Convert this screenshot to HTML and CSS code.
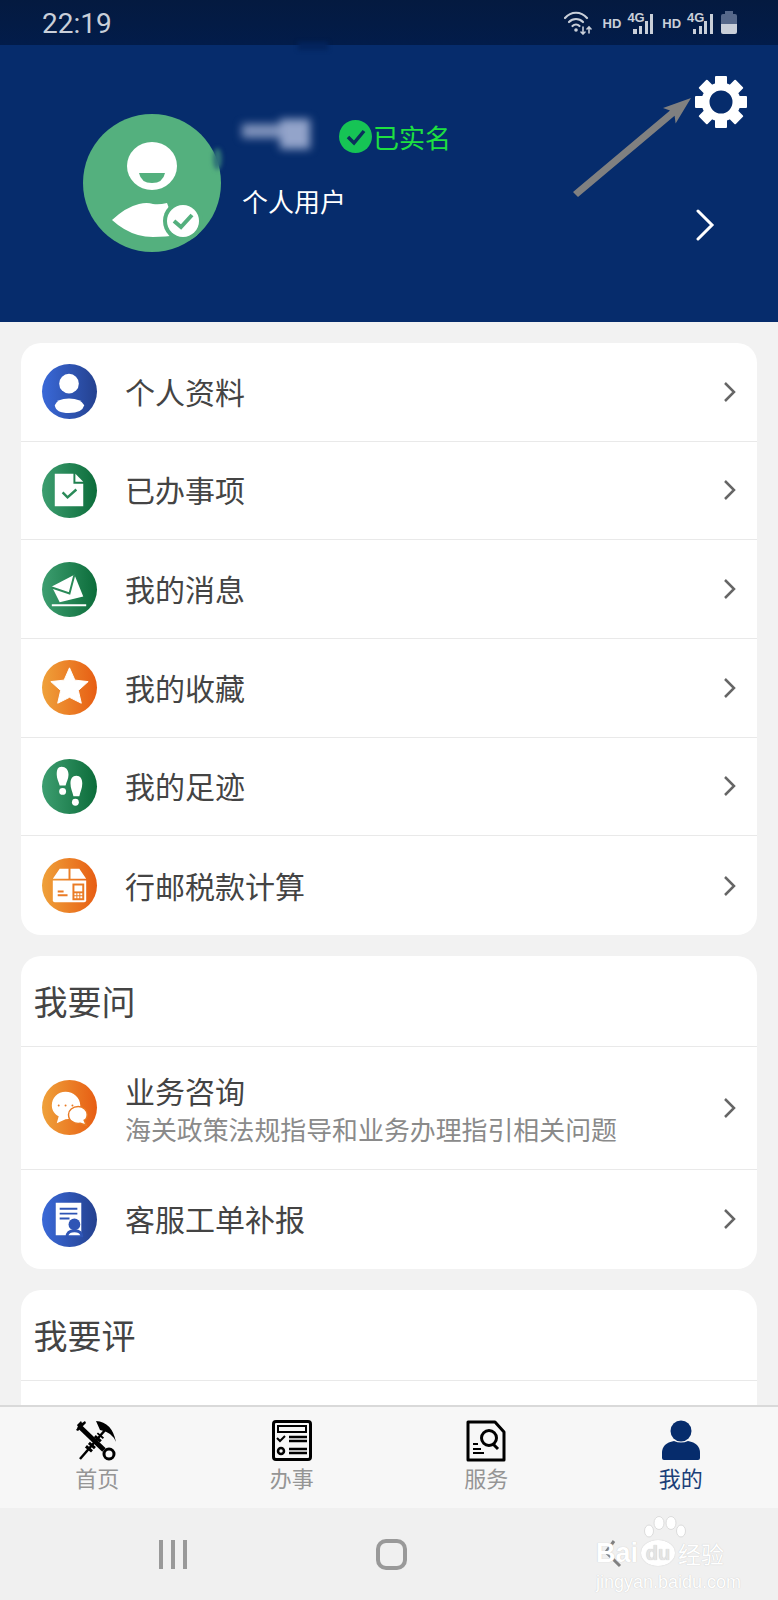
FILE: index.html
```html
<!DOCTYPE html>
<html lang="zh-CN">
<head>
  <meta charset="UTF-8">
  <meta name="viewport" content="width=device-width, initial-scale=1.0">
  <title>我的</title>
  <link rel="stylesheet" href="styles.css">
</head>
<body>
  <div class="app">
    <div class="status-bar">
      <span class="clock">22:19</span>
      <div class="status-icons">
        <svg class="wifi" width="28" height="24" viewBox="0 0 28 24" fill="none" stroke="#c9cfd9" stroke-width="2.200" stroke-linecap="round">
          <path d="M1 7c6-7 16-7 22 0"/>
          <path d="M5 11c4-4 10-4 14 0"/>
          <path d="M8.500 15c2-2 5-2 7 0"/>
          <circle cx="12" cy="19" r="1.800" fill="#c9cfd9" stroke="none"/>
          <path d="M19 16v7M17 21l2 2 2-2M25 22v-6M23 18l2-2 2 2" stroke-width="1.600"/>
        </svg>
        <span class="hd hd-first">HD</span>
        <div class="signal">
          <span class="net">4G</span>
          <i class="b1"></i><i class="b2"></i><i class="b3"></i><i class="b4"></i>
        </div>
        <span class="hd">HD</span>
        <div class="signal">
          <span class="net">4G</span>
          <i class="b1"></i><i class="b2"></i><i class="b3"></i><i class="b4"></i>
        </div>
        <div class="battery"></div>
      </div>
    </div>

    <header class="profile">
      <div class="top-smudge"></div>
      <div class="avatar">
        <svg width="138" height="138" viewBox="0 0 138 138">
          <circle cx="69" cy="69" r="69" fill="#54b07e"/>
          <ellipse cx="69" cy="52" rx="25" ry="24" fill="#fff"/>
          <path d="M56 59h26q-2 10-13 10t-13-10z" fill="#54b07e"/>
          <path d="M29 106q14-13 27-16 8-2 14 0 6 1 14-1l12 32q-14 2-26 2-8 0-15-2-14-4-26-15z" fill="#fff"/>
          <circle cx="100" cy="107" r="20" fill="#54b07e"/>
          <circle cx="100" cy="107" r="16" fill="#fff"/>
          <path d="M91 107l7 6 11-12" fill="none" stroke="#54b07e" stroke-width="4"/>
        </svg>
      </div>
      <div class="avatar-smudge"></div>
      <div class="info">
        <div class="name-line">
          <div class="name-blur"><i></i><b></b></div>
          <div class="verified">
            <svg width="33" height="33" viewBox="0 0 33 33">
              <circle cx="16.500" cy="16.500" r="16.500" fill="#16c455"/>
              <path d="M9 17l6 6 10-12" fill="none" stroke="#0b2f5c" stroke-width="3.500"/>
            </svg>
            <span>已实名</span>
          </div>
        </div>
        <p class="user-type">个人用户</p>
      </div>
      <svg class="gear" width="54" height="54" viewBox="-27 -27 54 54">
        <circle r="15.500" fill="none" stroke="#fff" stroke-width="8"/>
        <g fill="#fff">
          <rect x="-6" y="-26" width="12" height="10" rx="1"/>
          <rect x="-6" y="-26" width="12" height="10" rx="1" transform="rotate(45)"/>
          <rect x="-6" y="-26" width="12" height="10" rx="1" transform="rotate(90)"/>
          <rect x="-6" y="-26" width="12" height="10" rx="1" transform="rotate(135)"/>
          <rect x="-6" y="-26" width="12" height="10" rx="1" transform="rotate(180)"/>
          <rect x="-6" y="-26" width="12" height="10" rx="1" transform="rotate(225)"/>
          <rect x="-6" y="-26" width="12" height="10" rx="1" transform="rotate(270)"/>
          <rect x="-6" y="-26" width="12" height="10" rx="1" transform="rotate(315)"/>
        </g>
      </svg>
      <svg class="arrow" width="124" height="108" viewBox="0 0 124 108">
        <path fill="#808080" d="M1 98L98 16.400 91 13.900 119 4 103.600 29.500 102.600 21.800 6 103z"/>
      </svg>
      <svg class="more" width="20" height="32" viewBox="0 0 20 32" fill="none" stroke="#fff" stroke-width="3" stroke-linecap="round">
        <path d="M3 2l14 14L3 30"/>
      </svg>
    </header>

    <main class="content">
      <section class="card">
        <a class="row">
          <span class="badge blue">
            <svg viewBox="0 0 56 56"><circle cx="27.500" cy="20" r="10" fill="#fff"/><path d="M13 42q2-7 14.500-7T43 42q-2 8-15.500 8T13 42z" fill="#fff"/></svg>
          </span>
          <span class="title">个人资料</span>
          <svg class="chev" viewBox="0 0 14 22"><path d="M2 2l9 9-9 9"/></svg>
        </a>
        <a class="row">
          <span class="badge green">
            <svg viewBox="0 0 56 56"><path d="M13 11h19v10h10v23H13z" fill="#fff"/><path d="M34 11l8 8h-8z" fill="#fff"/><path d="M21 30l5 5 9-8" fill="none" stroke="#2a8a58" stroke-width="2.500"/></svg>
          </span>
          <span class="title">已办事项</span>
          <svg class="chev" viewBox="0 0 14 22"><path d="M2 2l9 9-9 9"/></svg>
        </a>
        <a class="row">
          <span class="badge green">
            <svg viewBox="0 0 56 56"><path d="M10 25l23-12 9 22-24 6z" fill="#fff"/><path d="M10 26l18 6 5-19" fill="none" stroke="#2a8a58" stroke-width="2"/><path d="M10 44h35" stroke="#fff" stroke-width="2"/></svg>
          </span>
          <span class="title">我的消息</span>
          <svg class="chev" viewBox="0 0 14 22"><path d="M2 2l9 9-9 9"/></svg>
        </a>
        <a class="row">
          <span class="badge orange">
            <svg viewBox="0 0 56 56"><path d="M28 8l5.500 12.500L47 22l-10 9 3 13-12-6-12 6 3-13-10-9 13.500-1.500z" fill="#fff" stroke="#fff" stroke-linejoin="round"/></svg>
          </span>
          <span class="title">我的收藏</span>
          <svg class="chev" viewBox="0 0 14 22"><path d="M2 2l9 9-9 9"/></svg>
        </a>
        <a class="row">
          <span class="badge green">
            <svg viewBox="0 0 56 56" fill="#fff"><path d="M20 8c4 0 7 3 7 8 0 4-2 7-3 11h-6c-1-4-3-7-3-11 0-5 1-8 5-8z"/><ellipse cx="21" cy="33" rx="3.500" ry="3.500"/><path d="M35 17c4 0 6 3 6 8 0 5-2 8-3 13h-6c-1-5-3-8-3-13 0-5 2-8 6-8z"/><ellipse cx="34" cy="44" rx="3.500" ry="3.500"/></svg>
          </span>
          <span class="title">我的足迹</span>
          <svg class="chev" viewBox="0 0 14 22"><path d="M2 2l9 9-9 9"/></svg>
        </a>
        <a class="row">
          <span class="badge orange">
            <svg viewBox="0 0 56 56"><path d="M18 11h9v10H11zM29 11h9l7 10H29z" fill="#fff"/><path d="M11 23h34v20a2 2 0 0 1-2 2H13a2 2 0 0 1-2-2z" fill="#fff"/><path d="M16 34h6M16 38h10" stroke="#ea7b25" stroke-width="2"/><rect x="31" y="26" width="12" height="17" fill="#ea7b25"/><rect x="33" y="28" width="8" height="6" fill="#fff"/><path d="M33 37h8M33 40h8" stroke="#fff" stroke-width="2" stroke-dasharray="2 1"/></svg>
          </span>
          <span class="title">行邮税款计算</span>
          <svg class="chev" viewBox="0 0 14 22"><path d="M2 2l9 9-9 9"/></svg>
        </a>
      </section>

      <section class="card">
        <h2 class="card-head">我要问</h2>
        <a class="row row-tall">
          <span class="badge orange">
            <svg viewBox="0 0 56 56"><path d="M24 12c8 0 15 6 15 14 0 8-7 14-15 14l-9 4 2-7c-4-2-7-6-7-11 0-8 6-14 14-14z" fill="#fff"/><circle cx="17" cy="26" r="1" fill="#ea7b25"/><circle cx="24" cy="26" r="1" fill="#ea7b25"/><circle cx="31" cy="26" r="1" fill="#ea7b25"/><path d="M37 27c5 0 9 4 9 8 0 3-1 5-3 6l2 5-6-2c-7 1-12-3-12-9 0-4 4-8 10-8z" fill="#fff" stroke="#ea7b25" stroke-width="1.500"/></svg>
          </span>
          <span class="text">
            <span class="title">业务咨询</span>
            <span class="sub">海关政策法规指导和业务办理指引相关问题</span>
          </span>
          <svg class="chev" viewBox="0 0 14 22"><path d="M2 2l9 9-9 9"/></svg>
        </a>
        <a class="row">
          <span class="badge blue">
            <svg viewBox="0 0 56 56"><path d="M14 11h26v33H14z" fill="#fff"/><path d="M18 17h18M18 22h18M18 27h10" stroke="#2f55b5" stroke-width="2"/><circle cx="33" cy="33" r="6" fill="#2f55b5"/><path d="M24 46q0-8 9-8t9 8z" fill="#2f55b5"/><path d="M27 44q1-3 6-3t6 3z" fill="#fff"/></svg>
          </span>
          <span class="title">客服工单补报</span>
          <svg class="chev" viewBox="0 0 14 22"><path d="M2 2l9 9-9 9"/></svg>
        </a>
      </section>

      <section class="card">
        <h2 class="card-head">我要评</h2>
        <div class="row"></div>
      </section>
    </main>

    <nav class="tabbar">
      <a class="tab">
        <svg width="42" height="42" viewBox="0 0 42 42">
          <path d="M3 6l25 24" stroke="#000" stroke-width="5" fill="none"/>
          <path d="M2 11l-2-1 2-3-1-2 4-4 1 2 3-2 1 2z" fill="#000"/>
          <circle cx="33" cy="34" r="5" fill="none" stroke="#000" stroke-width="3"/>
          <path d="M4 39l26-30" stroke="#000" stroke-width="2.500" fill="none"/>
          <path d="M12 30l13-15" stroke="#000" stroke-width="8" stroke-dasharray="3 1.500" fill="none"/>
          <path d="M20 1q16 1 20 21-4-10-16-12z" fill="#000"/>
        </svg>
        <span>首页</span>
      </a>
      <a class="tab">
        <svg width="42" height="42" viewBox="0 0 42 42" fill="none" stroke="#000">
          <rect x="2.500" y="1.500" width="37" height="38" rx="2.500" stroke-width="3"/>
          <rect x="7" y="6" width="28" height="6" stroke-width="2"/>
          <path d="M6 18l3 3 5-5" stroke-width="2"/>
          <path d="M18 17h18M18 21h18M18 29h18M18 33h18" stroke-width="2.500"/>
          <circle cx="10" cy="31" r="3" stroke-width="2.500"/>
        </svg>
        <span>办事</span>
      </a>
      <a class="tab">
        <svg width="42" height="42" viewBox="0 0 42 42" fill="none" stroke="#000" stroke-width="3">
          <path d="M3 2h27l9 10v28H3z" stroke-linejoin="round"/>
          <circle cx="24" cy="18" r="7.500"/>
          <path d="M28 24l5 5" />
          <path d="M8 24h5M8 29h8M8 33h11" stroke-width="2.200"/>
        </svg>
        <span>服务</span>
      </a>
      <a class="tab active">
        <svg width="42" height="42" viewBox="0 0 42 42" fill="#062c6c">
          <circle cx="21" cy="11" r="10.500"/>
          <path d="M2 38V33Q2 23 14 21q7 3 14 0 12 2 12 12v5q0 2-2 2H4q-2 0-2-2z"/>
        </svg>
        <span>我的</span>
      </a>
    </nav>

    <div class="navbar">
      <div class="recent"><i></i><i></i><i></i></div>
      <div class="home"></div>
      <svg class="back" width="18" height="28" viewBox="0 0 18 28" fill="none" stroke="#808080" stroke-width="3">
        <path d="M10 1L2 12l14 14"/>
      </svg>
      <div class="watermark">
        <svg class="paw" width="44" height="24" viewBox="0 0 44 24" fill="#fff" stroke="#dcdcdc">
          <ellipse cx="6" cy="15" rx="4.500" ry="6"/>
          <ellipse cx="16" cy="7" rx="5" ry="6.500"/>
          <ellipse cx="28" cy="7" rx="5" ry="6.500"/>
          <ellipse cx="38" cy="15" rx="4.500" ry="6"/>
        </svg>
        <div class="wm-logo"><span>Bai</span><span class="wm-du">du</span><span class="wm-cn">经验</span></div>
        <div class="wm-url">jingyan.baidu.com</div>
      </div>
    </div>
  </div>
</body>
</html>
```

FILE: styles.css
```css
/* Global Styles */
html, body {
  margin: 0;
  padding: 0;
}

body {
  font-family: "Noto Sans CJK SC", "Noto Sans", sans-serif;
  background: #f2f2f2;
}

.app {
  width: 778px;
  height: 1600px;
  display: flex;
  flex-direction: column;
  overflow: hidden;
}

/* Status bar */
.status-bar {
  height: 45px;
  flex: none;
  display: flex;
  align-items: center;
  justify-content: space-between;
  padding: 0 41px 0 42px;
  background: linear-gradient(180deg, #041a40 0%, #021c4a 100%);
  color: #c9cfd9;
}

.clock {
  font-family: Roboto, sans-serif;
  font-size: 28px;
  position: relative;
  top: 1px;
}

.status-icons {
  display: flex;
  align-items: center;
  height: 24px;
}

.hd {
  font-family: "Liberation Sans", sans-serif;
  font-size: 13px;
  font-weight: 700;
  margin: 0 6px 0 9px;
  padding-top: 2px;
}

.hd-first {
  margin-left: 11px;
}

.signal {
  display: flex;
  align-items: flex-end;
  gap: 2.400px;
  height: 22px;
  position: relative;
  padding-left: 6px;
}

.net {
  position: absolute;
  left: 0;
  top: -1px;
  font-family: "Liberation Sans", sans-serif;
  font-size: 13px;
  font-weight: 700;
  line-height: 13px;
}

.signal i {
  width: 3.200px;
  background: #c9cfd9;
  display: block;
}

.signal .b1 { height: 5px; }
.signal .b2 { height: 8px; }
.signal .b3 { height: 13px; }
.signal .b4 { height: 20px; }

.battery {
  width: 16px;
  height: 20px;
  margin: 3px 0 0 8px;
  position: relative;
  background: linear-gradient(180deg, #56688a 0 48%, #c9cfd9 48% 100%);
  border-radius: 2px;
}

.battery::before {
  content: "";
  position: absolute;
  left: 4px;
  top: -3px;
  width: 8px;
  height: 3px;
  background: #56688a;
}

/* Profile header */
.profile {
  height: 277px;
  flex: none;
  position: relative;
  display: flex;
  align-items: flex-start;
  padding: 69px 0 0 83px;
  box-sizing: border-box;
  background: #062c6c;
}

.top-smudge {
  position: absolute;
  left: 298px;
  top: -3px;
  width: 30px;
  height: 8px;
  background: #03235c;
  filter: blur(2px);
}

.avatar {
  width: 138px;
  height: 138px;
  flex: none;
}

.avatar svg {
  display: block;
}

.avatar-smudge {
  position: absolute;
  left: 213px;
  top: 103px;
  width: 9px;
  height: 22px;
  border-radius: 50%;
  background: #2f7178;
  filter: blur(2px);
}

.info {
  margin-left: 21px;
}

.name-line {
  display: flex;
  align-items: center;
  height: 44px;
}

.name-blur {
  width: 68px;
  height: 34px;
  display: flex;
  align-items: flex-start;
  filter: blur(4px);
}

.name-blur i {
  display: block;
  width: 38px;
  height: 14px;
  margin-top: 5px;
  background: #7f92bb;
}

.name-blur b {
  display: block;
  width: 30px;
  height: 30px;
  background: #93a4ca;
}

.verified {
  display: flex;
  align-items: center;
  gap: 1px;
  margin-left: 29px;
  color: #1ee040;
  font-size: 26px;
  line-height: 33px;
}

.user-type {
  margin: 25px 0 0;
  color: #fff;
  font-size: 26px;
  line-height: 36px;
}

.gear {
  position: absolute;
  top: 30px;
  left: 694px;
}

.arrow {
  position: absolute;
  top: 49px;
  left: 572px;
}

.more {
  position: absolute;
  left: 695px;
  top: 164px;
}

/* Cards */
.content {
  flex: 1;
  min-height: 0;
  overflow: hidden;
  padding: 21px 21px 0;
}

.card {
  background: #fff;
  border-radius: 20px;
  margin-bottom: 21px;
  overflow: hidden;
}

.row {
  display: flex;
  align-items: center;
  height: 98.670px;
  box-sizing: border-box;
  padding: 0 20px 0 20.500px;
  color: #444;
  border-bottom: 1px solid #e9e9e9;
}

.row:last-child {
  border-bottom: none;
}

.row-tall {
  height: 123px;
}

.badge {
  width: 55px;
  height: 55px;
  flex: none;
  border-radius: 50%;
  margin-right: 28.500px;
}

.badge svg {
  display: block;
  width: 55px;
  height: 55px;
}

.blue { background: linear-gradient(90deg, #3a69d8 0%, #24418f 100%); }
.green { background: linear-gradient(90deg, #3d9e70 0%, #0c6c3a 100%); }
.orange { background: linear-gradient(90deg, #efa13a 0%, #e75d13 100%); }

.title {
  font-size: 30px;
  line-height: 40px;
  display: block;
  margin-top: -2px;
}

.text {
  display: block;
}

.text .title {
  margin-top: 0;
}

.sub {
  display: block;
  margin-top: 2px;
  font-size: 25.900px;
  line-height: 34px;
  color: #8a8a8a;
}

.chev {
  width: 14px;
  height: 22px;
  margin-left: auto;
  fill: none;
  stroke: #666;
  stroke-width: 2.500;
}

.card-head {
  margin: 0;
  height: 91px;
  padding-left: 12.500px;
  box-sizing: border-box;
  font-size: 34px;
  font-weight: 400;
  line-height: 89px;
  color: #444;
  border-bottom: 1px solid #e9e9e9;
}

/* Bottom tabs */
.tabbar {
  height: 103px;
  flex: none;
  display: flex;
  box-sizing: border-box;
  padding-top: 13px;
  background: #f7f7f7;
  border-top: 2px solid #d9d9d9;
}

.tab {
  flex: 1;
  display: flex;
  flex-direction: column;
  align-items: center;
  color: #959595;
  font-size: 22px;
  line-height: 30px;
}

.tab.active {
  color: #1c3f78;
}

/* System nav bar */
.navbar {
  height: 92px;
  flex: none;
  position: relative;
  display: flex;
  align-items: center;
  background: #f0f0f0;
}

.recent {
  display: flex;
  gap: 8px;
  margin-left: 159px;
}

.recent i {
  display: block;
  width: 4px;
  height: 29px;
  background: #999;
}

.home {
  width: 23px;
  height: 23px;
  margin-left: 189px;
  border: 4px solid #999;
  border-radius: 10px;
}

.back {
  margin-left: 197px;
}

.watermark {
  position: absolute;
  left: 596px;
  top: 8px;
  width: 140px;
  color: #fff;
  font-family: "Liberation Sans", sans-serif;
}

.paw {
  display: block;
  margin-left: 47px;
}

.wm-logo {
  display: flex;
  align-items: center;
  height: 26px;
  font-size: 27px;
  font-weight: 700;
  line-height: 26px;
  text-shadow: 0 0 1px #bdbdbd;
}

.wm-du {
  width: 34px;
  height: 26px;
  margin-left: 3px;
  border-radius: 50%;
  background: #fff;
  color: #e4e4e4;
  font-size: 20px;
  text-align: center;
  box-shadow: 0 0 1px #bdbdbd;
}

.wm-cn {
  margin-left: 3px;
  font-family: "Noto Sans CJK SC", sans-serif;
  font-size: 23px;
  font-weight: 400;
  white-space: nowrap;
}

.wm-url {
  margin-top: 6px;
  font-size: 18px;
  line-height: 20px;
  white-space: nowrap;
  text-shadow: 0 0 1px #bdbdbd;
}
```
